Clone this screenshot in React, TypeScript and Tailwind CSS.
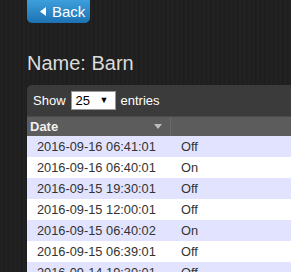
const rows = [
  ['2016-09-16 06:41:01', 'Off'],
  ['2016-09-16 06:40:01', 'On'],
  ['2016-09-15 19:30:01', 'Off'],
  ['2016-09-15 12:00:01', 'Off'],
  ['2016-09-15 06:40:02', 'On'],
  ['2016-09-15 06:39:01', 'Off'],
  ['2016-09-14 19:30:01', 'Off'],
];

export default function App() {
  return (
    <div className="h-[272px] w-[291px] overflow-hidden bg-[#1f1f1f] bg-[repeating-linear-gradient(90deg,#1d1d1d_0px,#252525_2px,#1c1c1c_3px,#222222_6px,#1e1e1e_9px)] font-['Liberation_Sans',Arial,sans-serif]">
      {/* Back button */}
      <div className="pl-[27px]">
        <button
          type="button"
          className="flex h-[23px] w-[63px] items-center gap-[6px] rounded-b-[5px] bg-gradient-to-b from-[#3d9fdd] to-[#1d72b3] pl-[13px] text-[15px] leading-none text-white"
        >
          <svg width="6" height="9" viewBox="0 0 6 9" aria-hidden="true">
            <path d="M6 0 L0 4.5 L6 9 Z" fill="#fff" />
          </svg>
          Back
        </button>
      </div>

      <h1 className="mt-[28px] pl-[27px] text-[20px] leading-[24px] text-[#dcdcdc]">Name: Barn</h1>

      {/* Table panel */}
      <div className="ml-[27px] mt-[10px] w-[280px] overflow-hidden rounded-tl-[5px]">
        <div className="flex h-[31px] items-center gap-[5px] bg-[#3b3b3b] pl-[6px] text-[13px] text-white">
          <span>Show</span>
          <div className="flex h-[19px] w-[45px] items-center justify-between border border-[#999] bg-white pl-[4px] pr-[6px] text-[13px] text-black">
            <span>25</span>
            <span className="text-[9px]">▼</span>
          </div>
          <span>entries</span>
        </div>

        <div className="flex h-[20px] border-t border-[#4a4a4a] bg-[#5c5c5c] text-[13px] font-bold text-[#f0f0f0]">
          <div className="flex w-[144px] items-center justify-between border-r border-[#6a6a6a] pl-[3px] pr-[8px]">
            <span>Date</span>
            <svg width="8" height="5" viewBox="0 0 8 5" aria-hidden="true">
              <path d="M0 0 H8 L4 5 Z" fill="#bdbdbd" />
            </svg>
          </div>
          <div className="flex-1" />
        </div>

        {rows.map(([date, state], i) => (
          <div
            key={date}
            className={`flex h-[21px] items-center text-[12.8px] text-[#333] ${i % 2 === 0 ? 'bg-[#e2e4ff]' : 'bg-white'}`}
          >
            <span className="w-[154px] pl-[10px]">{date}</span>
            <span>{state}</span>
          </div>
        ))}
      </div>
    </div>
  );
}
